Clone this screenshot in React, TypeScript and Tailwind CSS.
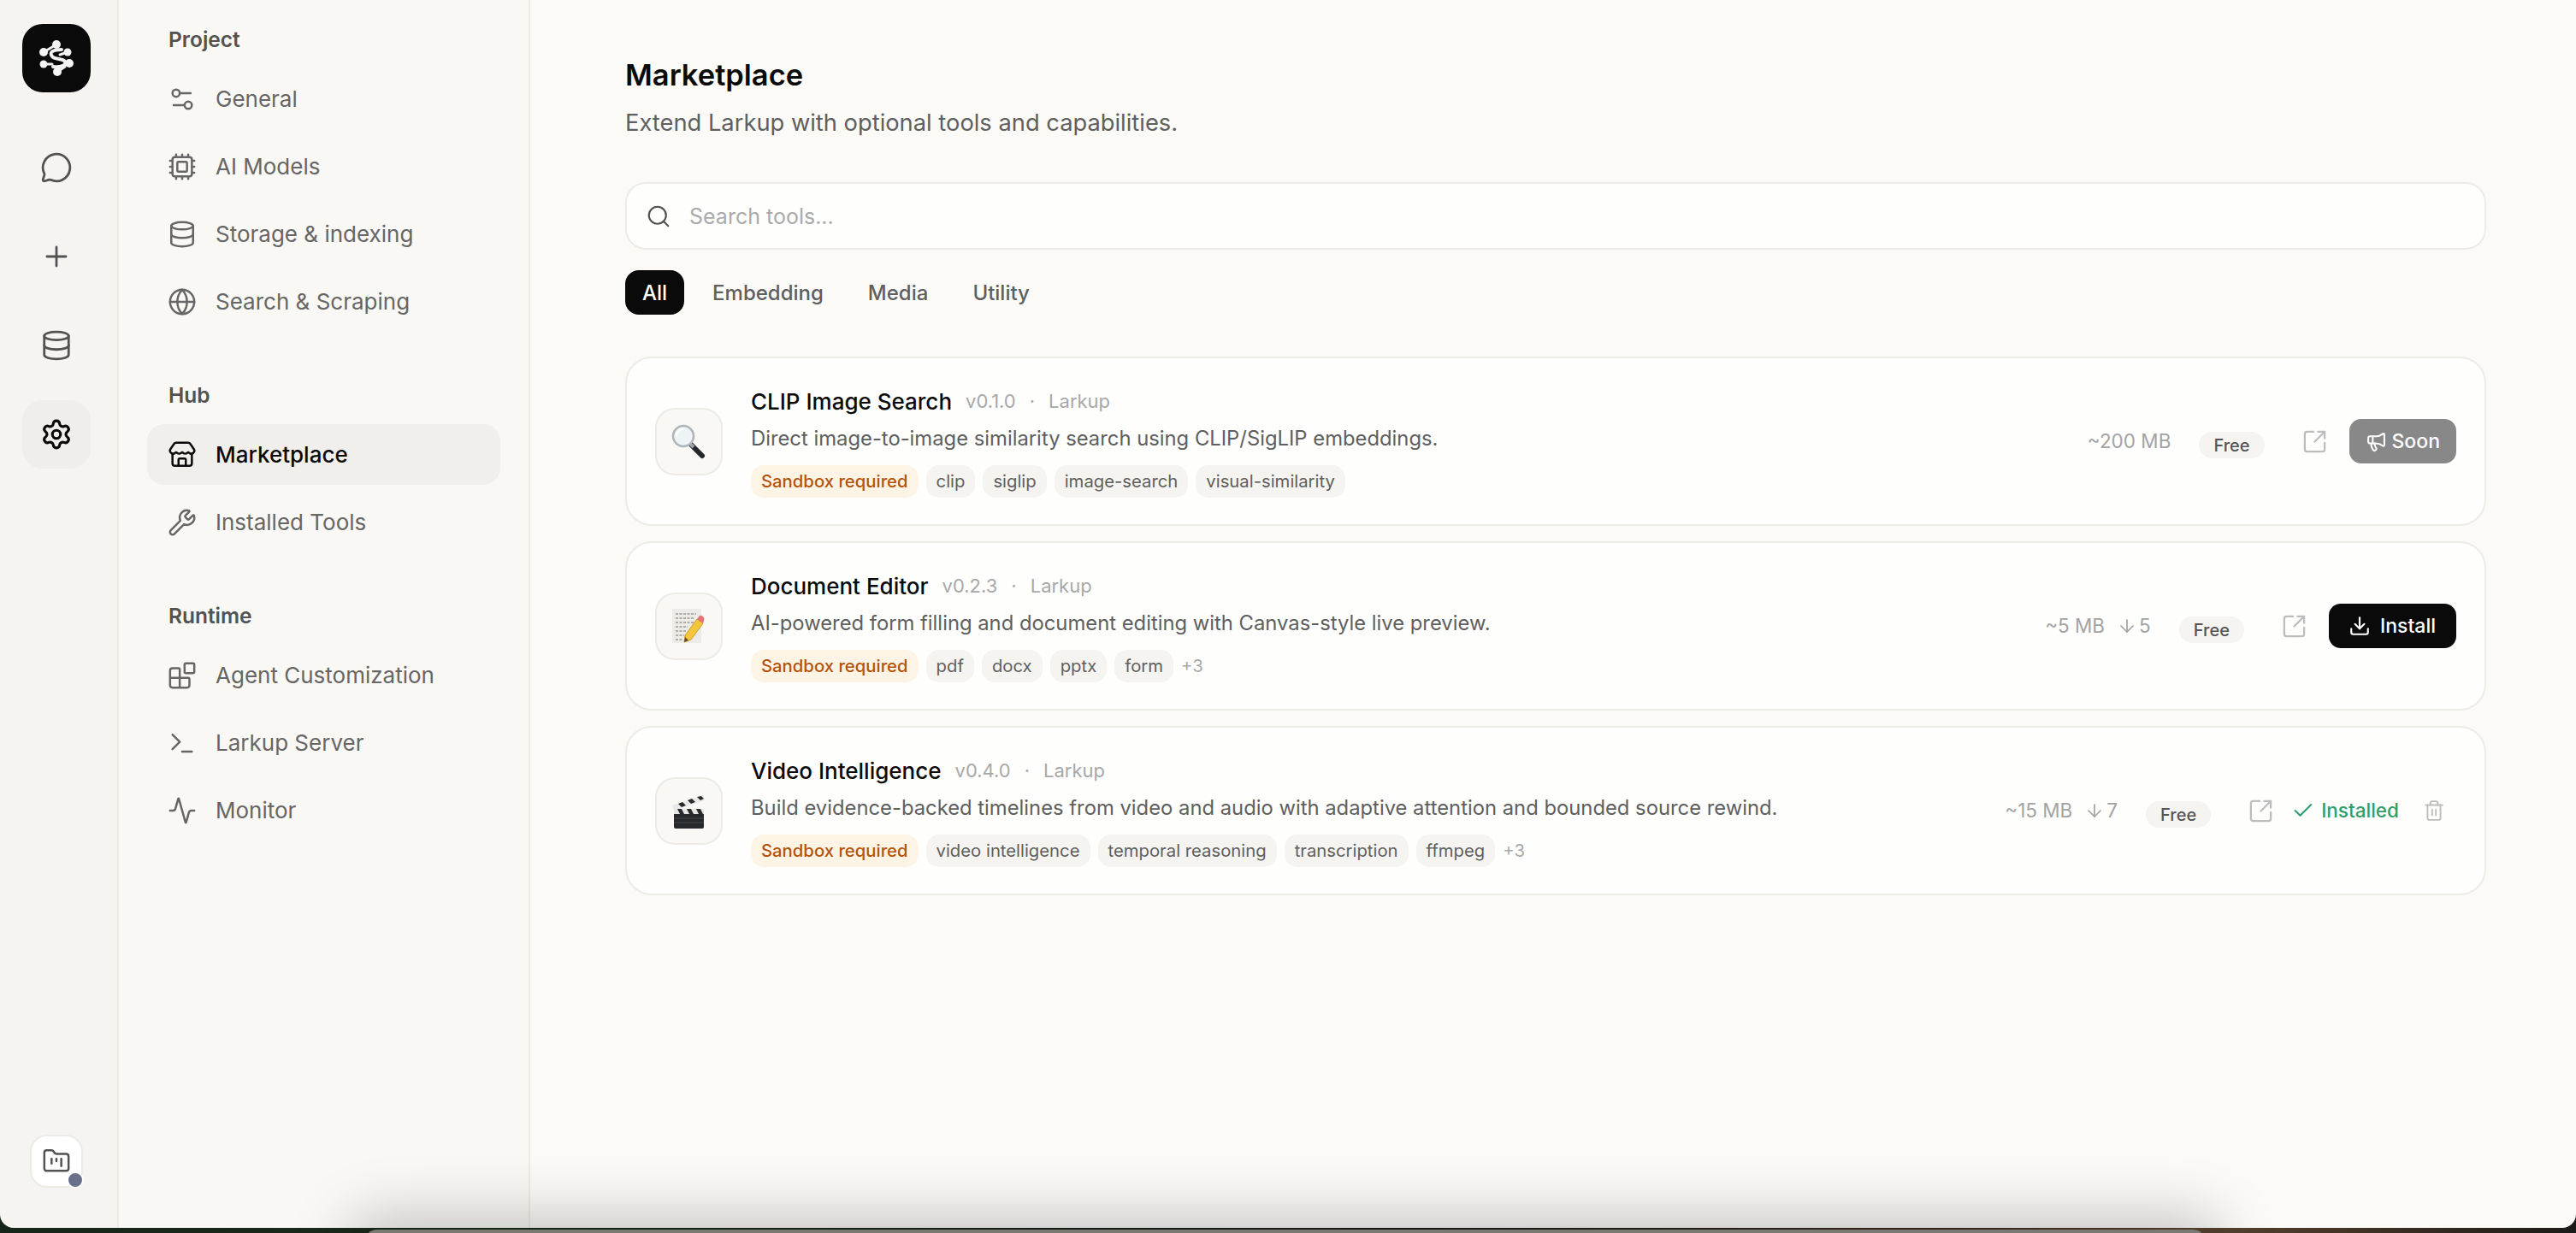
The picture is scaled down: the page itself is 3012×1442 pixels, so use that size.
import {
  Activity,
  ArrowDown,
  Blocks,
  Check,
  Cpu,
  Database,
  Download,
  FolderKanban,
  Globe,
  Megaphone,
  MessageCircle,
  Plus,
  Search,
  Settings,
  Settings2,
  SquareArrowOutUpRight,
  Store,
  Terminal,
  Trash2,
  Wrench,
} from "lucide-react";
import type { ReactNode } from "react";

const NAV = [
  {
    title: "Project",
    items: [
      { label: "General", icon: Settings2 },
      { label: "AI Models", icon: Cpu },
      { label: "Storage & indexing", icon: Database },
      { label: "Search & Scraping", icon: Globe },
    ],
  },
  {
    title: "Hub",
    items: [
      { label: "Marketplace", icon: Store, active: true },
      { label: "Installed Tools", icon: Wrench },
    ],
  },
  {
    title: "Runtime",
    items: [
      { label: "Agent Customization", icon: Blocks },
      { label: "Larkup Server", icon: Terminal },
      { label: "Monitor", icon: Activity },
    ],
  },
];

function LogoMark() {
  return (
    <svg width="80" height="80" viewBox="0 0 80 80" fill="none">
      <g stroke="#f2f2f2" strokeWidth="3" strokeLinecap="round">
        <path d="M40 24 L25 33" />
        <path d="M25 47 L35 47" />
        <path d="M53 33 L44 36" />
        <path d="M41 56 L50 50" />
        <path d="M46 30 C36 30 31 33 35 38 C38 42 48 40 50 44 C52 49 44 51 36 50" strokeWidth="4" />
      </g>
      <g fill="#f4f4f4">
        <circle cx="40" cy="24" r="5" />
        <circle cx="25" cy="33" r="5" />
        <circle cx="53" cy="33" r="4.5" />
        <circle cx="25" cy="47" r="4.5" />
        <circle cx="55" cy="46" r="5" />
        <circle cx="41" cy="56" r="5" />
      </g>
    </svg>
  );
}

function MagnifierEmoji() {
  return (
    <svg width="42" height="42" viewBox="0 0 42 42" className="-translate-x-[1px]">
      <path d="M24 25 L37 38" stroke="#22262b" strokeWidth="6" strokeLinecap="round" />
      <path d="M23 24 L27 28" stroke="#9aa0a6" strokeWidth="4" />
      <circle cx="15" cy="15" r="12" fill="#eef3f6" stroke="#aeb6bb" strokeWidth="2.5" />
      <path d="M7 15 A8 8 0 0 1 15 7" fill="none" stroke="#ffffff" strokeWidth="2" />
    </svg>
  );
}

function MemoEmoji() {
  return (
    <svg width="42" height="42" viewBox="0 0 42 42" className="-translate-x-[1px]">
      <rect x="2" y="1" width="34" height="40" fill="#ecebe8" />
      <g stroke="#77736c" strokeWidth="1.2">
        <path d="M6 7h24M6 12h22M6 17h24M6 22h14M6 27h12M6 32h10M6 37h8" strokeDasharray="3 1.5" />
      </g>
      <path d="M31 13 L38 18 L24 37 L16 40 L17 32 Z" fill="#f4c63d" stroke="#d49a22" strokeWidth="1" />
      <path d="M31 13 L34 9 Q36 8 39 11 Q40 13 38 18 Z" fill="#e2737a" />
      <path d="M16 40 L17 34 L21 38 Z" fill="#5a4a3a" />
    </svg>
  );
}

function ClapperEmoji() {
  return (
    <svg width="42" height="42" viewBox="0 0 42 42" className="-translate-x-[1px]">
      <path d="M2 15 L38 3 L40 9 L4 21 Z" fill="#e8e8e8" />
      <path d="M9 13 L14 11 L18 15 L13 17 Z M20 9 L25 7 L29 11 L24 13 Z M31 5 L36 4 L39 7 L35 9 Z" fill="#2b2b2b" />
      <rect x="4" y="19" width="35" height="23" rx="2" fill="#26282b" />
      <path d="M4 19h35v6H4z" fill="#e6e6e6" />
      <path d="M8 19h5l3 6h-5zM19 19h5l3 6h-5zM30 19h5l3 6h-5z" fill="#2b2b2b" />
      <path d="M4 30h35M4 35h35" stroke="#44474b" strokeWidth="1" />
    </svg>
  );
}

function Sidebar() {
  return (
    <aside className="w-[481px] shrink-0 border-r-2 border-[#ecebe5] bg-[#f9f8f4] px-[33px] pt-[29px]">
      {NAV.map((section) => (
        <div key={section.title} className="mb-[57px] flex flex-col gap-[8px]">
          <div className="mb-[9px] h-[34px] pl-[25px] text-[24.5px] font-semibold leading-[34px] text-[#525252]">{section.title}</div>
          {section.items.map((item) => {
            const Icon = item.icon;
            return (
              <div
                key={item.label}
                className={
                  item.active
                    ? "flex h-[71px] items-center gap-[22px] rounded-[20px] bg-[#f0efeb] pl-[24px] text-[26px] font-medium text-[#0a0a0a]"
                    : "flex h-[71px] items-center gap-[22px] rounded-[20px] pl-[24px] text-[26px] text-[#666666]"
                }
              >
                <Icon size={34} strokeWidth={1.75} />
                <span>{item.label}</span>
              </div>
            );
          })}
        </div>
      ))}
    </aside>
  );
}

function Rail() {
  return (
    <nav className="flex w-[139px] shrink-0 flex-col items-center border-r-2 border-[#ecebe5] bg-[#f5f4f0] pb-[47px] pr-[5px] pt-[28px]">
      <div className="flex size-[80px] items-center justify-center rounded-[24px] bg-[#0a0a0a]">
        <LogoMark />
      </div>
      <div className="mt-[48px] flex flex-col gap-[24px] text-[#525252]">
        <div className="flex size-[80px] items-center justify-center">
          <MessageCircle size={38} strokeWidth={1.75} />
        </div>
        <div className="flex size-[80px] items-center justify-center">
          <Plus size={38} strokeWidth={1.75} />
        </div>
        <div className="flex size-[80px] items-center justify-center">
          <Database size={38} strokeWidth={1.75} />
        </div>
        <div className="flex size-[80px] items-center justify-center rounded-[24px] bg-[#efeeea] text-[#0a0a0a]">
          <Settings size={38} strokeWidth={2} />
        </div>
      </div>
      <div className="relative mt-auto flex size-[62px] items-center justify-center rounded-[20px] border-2 border-[#ecebe5] bg-white text-[#525252]">
        <FolderKanban size={34} strokeWidth={1.75} />
        <span className="absolute bottom-[-3px] right-[-3px] size-[20px] rounded-full border-2 border-white bg-[#69708a]" />
      </div>
    </nav>
  );
}

type Plugin = {
  name: string;
  version: string;
  description: string;
  emoji: ReactNode;
  tags: string[];
  more?: number;
  size: string;
  downloads?: number;
  action: "soon" | "install" | "installed";
};

const PLUGINS: Plugin[] = [
  {
    name: "CLIP Image Search",
    version: "v0.1.0",
    description: "Direct image-to-image similarity search using CLIP/SigLIP embeddings.",
    emoji: <MagnifierEmoji />,
    tags: ["clip", "siglip", "image-search", "visual-similarity"],
    size: "~200 MB",
    action: "soon",
  },
  {
    name: "Document Editor",
    version: "v0.2.3",
    description: "AI-powered form filling and document editing with Canvas-style live preview.",
    emoji: <MemoEmoji />,
    tags: ["pdf", "docx", "pptx", "form"],
    more: 3,
    size: "~5 MB",
    downloads: 5,
    action: "install",
  },
  {
    name: "Video Intelligence",
    version: "v0.4.0",
    description: "Build evidence-backed timelines from video and audio with adaptive attention and bounded source rewind.",
    emoji: <ClapperEmoji />,
    tags: ["video intelligence", "temporal reasoning", "transcription", "ffmpeg"],
    more: 3,
    size: "~15 MB",
    downloads: 7,
    action: "installed",
  },
];

function PluginAction({ action }: { action: Plugin["action"] }) {
  if (action === "soon") {
    return (
      <div className="ml-[25px] flex h-[52px] items-center gap-[6px] rounded-[14px] bg-[#888888] px-[19px] text-[23px] font-medium text-white">
        <Megaphone size={25} strokeWidth={2} />
        Soon
      </div>
    );
  }
  if (action === "install") {
    return (
      <div className="ml-[25px] flex h-[52px] items-center gap-[11px] rounded-[14px] bg-[#0a0a0a] pl-[23px] pr-[24px] text-[23px] font-medium text-white">
        <Download size={26} strokeWidth={2} />
        Install
      </div>
    );
  }
  return (
    <>
      <div className="ml-[20px] flex items-center gap-[7px] text-[22.5px] font-medium text-[#2f9e6b]">
        <Check size={28} strokeWidth={1.75} />
        Installed
      </div>
      <div className="ml-[28px] mr-[13px] text-[#bdbdbd]">
        <Trash2 size={26} strokeWidth={1.75} />
      </div>
    </>
  );
}

function PluginCard({ plugin }: { plugin: Plugin }) {
  return (
    <div className="flex h-[198px] items-center rounded-[31px] border-2 border-[#ecebe5] bg-[#fefefd] px-[33px]">
      <div className="flex size-[79px] shrink-0 items-center justify-center rounded-[23px] border-2 border-[#ecebe5] bg-[#f9f8f5]">
        {plugin.emoji}
      </div>
      <div className="ml-[33px] min-w-0 flex-1">
        <div className="flex h-[39px] items-center">
          <span className="text-[26px] font-medium text-[#0a0a0a]">{plugin.name}</span>
          <span className="ml-[16px] text-[22px] text-[#a8a8a8]">{plugin.version}</span>
          <span className="mx-[16px] text-[22px] text-[#a8a8a8]">·</span>
          <span className="text-[22px] text-[#a8a8a8]">Larkup</span>
        </div>
        <div className="mt-[5px] h-[38px] text-[23.8px] leading-[38px] text-[#5f5f5f]">{plugin.description}</div>
        <div className="mt-[12px] flex items-center gap-[9px]">
          <span className="flex h-[38px] items-center rounded-[15px] bg-[#fdf4e6] px-[12px] text-[20.3px] font-medium text-[#b45309]">
            Sandbox required
          </span>
          {plugin.tags.map((tag) => (
            <span key={tag} className="flex h-[38px] items-center rounded-[15px] bg-[#f5f4f0] px-[12px] text-[20.3px] text-[#5f5f5f]">
              {tag}
            </span>
          ))}
          {plugin.more ? <span className="text-[20.3px] text-[#a8a8a8]">+{plugin.more}</span> : null}
        </div>
      </div>
      <div className="flex shrink-0 items-center">
        <span className="text-[22.5px] text-[#a3a3a3]">{plugin.size}</span>
        {plugin.downloads ? (
          <span className="ml-[14px] flex items-center gap-[2px] text-[22.5px] text-[#a3a3a3]">
            <ArrowDown size={24} strokeWidth={1.75} />
            {plugin.downloads}
          </span>
        ) : null}
        <span className="ml-[33px] mt-[9px] flex h-[31px] items-center rounded-full bg-[#f5f4f0] px-[17px] text-[20px] font-medium text-[#555555]">
          Free
        </span>
        <div className="ml-[43px] text-[#bdbdbd]">
          <SquareArrowOutUpRight size={31} strokeWidth={1.75} />
        </div>
        <PluginAction action={plugin.action} />
      </div>
    </div>
  );
}

export default function App() {
  return (
    <div className="relative h-screen overflow-hidden bg-[linear-gradient(90deg,#16241a,#1d2c1c_20%,#1a1c18_55%,#3b2c20_75%,#5c4530_85%,#1c1a18)] font-['Inter',sans-serif]">
      <div className="flex h-[1436px] overflow-hidden rounded-b-[16px]">
        <Rail />
        <Sidebar />
        <main className="min-w-0 flex-1 bg-[#fbfaf7] pl-[111px] pr-[105px] pt-[64px]">
          <h1 className="text-[34.5px] font-semibold leading-[48px] text-[#0a0a0a]">Marketplace</h1>
          <p className="mt-[12px] text-[27.3px] leading-[40px] text-[#5f5f5f]">Extend Larkup with optional tools and capabilities.</p>
          <div className="mt-[49px] flex h-[79px] items-center gap-[21px] rounded-[24px] border-2 border-[#ecebe5] bg-[#fefefd] px-[22px]">
            <Search size={30} strokeWidth={1.75} className="shrink-0 text-[#525252]" />
            <input
              placeholder="Search tools..."
              className="mt-[3px] min-w-0 flex-1 bg-transparent text-[25px] outline-none placeholder:text-[#aaaaaa]"
            />
          </div>
          <div className="mt-[24px] flex gap-[12px] text-[24px] font-medium">
            <div className="flex h-[52px] items-center rounded-[16px] bg-[#0a0a0a] px-[20px] pt-[1px] text-white">All</div>
            <div className="ml-[1px] flex h-[52px] items-center rounded-[16px] px-[20px] pt-[1px] text-[#5f5f5f]">Embedding</div>
            <div className="flex h-[52px] items-center rounded-[16px] px-[20px] pt-[1px] text-[#5f5f5f]">Media</div>
            <div className="flex h-[52px] items-center rounded-[16px] px-[20px] pt-[1px] text-[#5f5f5f]">Utility</div>
          </div>
          <div className="mt-[49px] flex flex-col gap-[18px]">
            {PLUGINS.map((plugin) => (
              <PluginCard key={plugin.name} plugin={plugin} />
            ))}
          </div>
        </main>
      </div>
      {/* window sitting behind, only its top edge and shadow show */}
      <div className="absolute left-[425px] top-[1438px] h-[60px] w-[2155px] rounded-t-[16px] bg-[#7a7a72] shadow-[0_0_70px_16px_rgba(0,0,0,0.22)]" />
    </div>
  );
}
